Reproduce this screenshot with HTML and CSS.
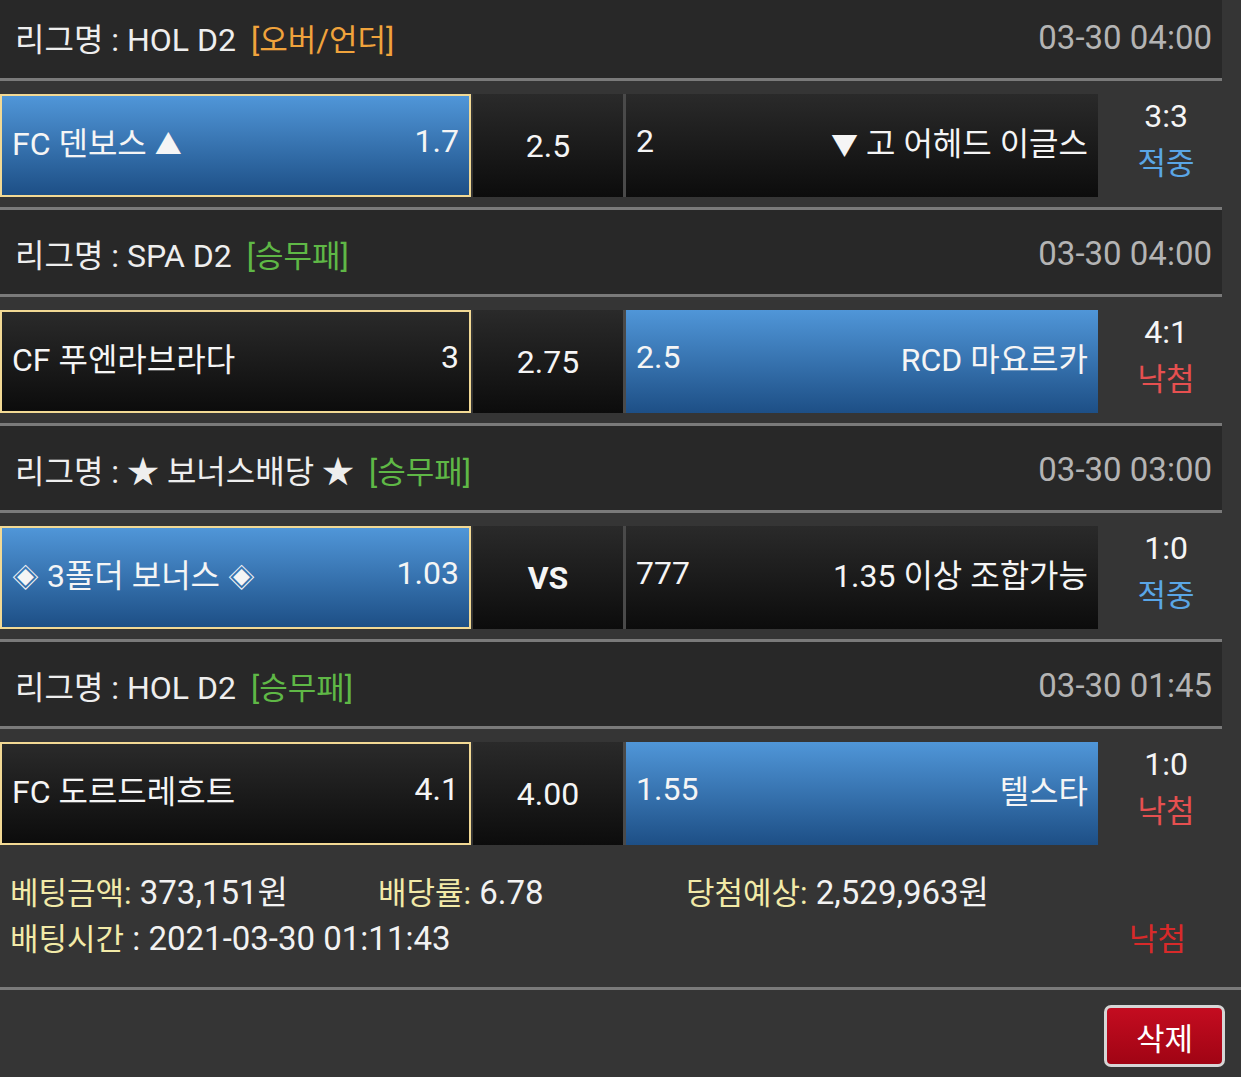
FILE: index.html
```html
<!DOCTYPE html>
<html lang="ko">

<head>
    <meta charset="UTF-8">
    <meta name="viewport" content="width=device-width, initial-scale=1.0">
    <title>배팅내역</title>
    <link rel="stylesheet" href="styles.css">
</head>

<body>
    <div class="bet-list">
        <div class="league">
            <span class="league-name">리그명 : HOL D2</span>
            <span class="tag tag-ou">[오버/언더]</span>
            <span class="league-time">03-30 04:00</span>
        </div>
        <div class="game">
            <div class="cell home picked">
                <span>FC 덴보스 <span class="arrow">▲</span></span>
                <span>1.7</span>
            </div>
            <div class="cell draw">2.5</div>
            <div class="cell away">
                <span>2</span>
                <span><span class="arrow">▼</span> 고 어헤드 이글스</span>
            </div>
            <div class="result">
                <span class="score">3:3</span>
                <span class="status win">적중</span>
            </div>
        </div>

        <div class="league">
            <span class="league-name">리그명 : SPA D2</span>
            <span class="tag tag-wdl">[승무패]</span>
            <span class="league-time">03-30 04:00</span>
        </div>
        <div class="game">
            <div class="cell home">
                <span>CF 푸엔라브라다</span>
                <span>3</span>
            </div>
            <div class="cell draw">2.75</div>
            <div class="cell away picked">
                <span>2.5</span>
                <span>RCD 마요르카</span>
            </div>
            <div class="result">
                <span class="score">4:1</span>
                <span class="status lose">낙첨</span>
            </div>
        </div>

        <div class="league">
            <span class="league-name">리그명 : ★ 보너스배당 ★</span>
            <span class="tag tag-wdl">[승무패]</span>
            <span class="league-time">03-30 03:00</span>
        </div>
        <div class="game">
            <div class="cell home picked">
                <span><span class="arrow">◈</span> 3폴더 보너스 <span class="arrow">◈</span></span>
                <span>1.03</span>
            </div>
            <div class="cell draw vs">VS</div>
            <div class="cell away">
                <span>777</span>
                <span>1.35 이상 조합가능</span>
            </div>
            <div class="result">
                <span class="score">1:0</span>
                <span class="status win">적중</span>
            </div>
        </div>

        <div class="league">
            <span class="league-name">리그명 : HOL D2</span>
            <span class="tag tag-wdl">[승무패]</span>
            <span class="league-time">03-30 01:45</span>
        </div>
        <div class="game last">
            <div class="cell home">
                <span>FC 도르드레흐트</span>
                <span>4.1</span>
            </div>
            <div class="cell draw">4.00</div>
            <div class="cell away picked">
                <span>1.55</span>
                <span>텔스타</span>
            </div>
            <div class="result">
                <span class="score">1:0</span>
                <span class="status lose">낙첨</span>
            </div>
        </div>
    </div>

    <div class="summary">
        <div class="summary-row">
            <span class="item item-amount"><b>베팅금액:</b> 373,151원</span>
            <span class="item item-rate"><b>배당률:</b> 6.78</span>
            <span class="item"><b>당첨예상:</b> 2,529,963원</span>
        </div>
        <div class="summary-row">
            <span class="item"><b>배팅시간</b> : 2021-03-30 01:11:43</span>
            <span class="summary-status">낙첨</span>
        </div>
    </div>

    <div class="actions">
        <button type="button" class="delete-button">삭제</button>
    </div>
</body>

</html>
```

FILE: styles.css
```css
body {
    margin: 0;
    background-color: #353535;
    color: #f2f2f2;
    font-family: Roboto, "Noto Sans CJK KR", sans-serif;
    font-size: 31px;
    overflow: hidden;
}

.bet-list {
    width: 1222px;
    margin-top: -6px;
}

.league {
    display: flex;
    align-items: center;
    height: 87px;
    padding: 2px 10px 0 15px;
    background-color: #282828;
    border-bottom: 3px solid #7a7a7a;
    box-sizing: border-box;
    font-size: 32px;
}

.league-name {
    color: #eeeeee;
    font-size: 32px;
}

.tag {
    margin-left: 15px;
    font-size: 31px;
}

.tag-ou {
    color: #f0a33c;
}

.tag-wdl {
    color: #5fb846;
}

.league-time {
    margin-left: auto;
    color: #b4b4b4;
    font-size: 33px;
}

.game {
    display: flex;
    height: 103px;
    padding: 13px 0 10px;
    border-bottom: 3px solid #7a7a7a;
}

.game.last {
    padding-bottom: 0;
    border-bottom: none;
}

.cell {
    display: flex;
    align-items: center;
    justify-content: space-between;
    height: 103px;
    box-sizing: border-box;
    padding: 0 10px 10px;
    background: linear-gradient(to bottom, #2a2a2a, #0c0c0c);
    color: #f5f5f5;
    font-size: 32px;
}

.cell.picked {
    background: linear-gradient(to bottom, #5096d8, #1d4f86);
}

.arrow {
    font-size: 27px;
}

.home {
    width: 471px;
    border: 2px solid #f2d994;
}

.draw {
    width: 153px;
    margin-left: 2px;
    justify-content: center;
    border-right: 3px solid #4a4a4a;
    padding: 0;
}

.vs {
    font-weight: bold;
}

.away {
    width: 472px;
}

.result {
    display: flex;
    flex-direction: column;
    align-items: center;
    justify-content: center;
    width: 124px;
    height: 103px;
    box-sizing: border-box;
    padding: 0 0 12px 12px;
    gap: 6px;
    line-height: 42px;
    font-size: 32px;
}

.score {
    color: #f5f5f5;
}

.status {
    font-size: 31px;
}

.status.win {
    color: #5aa6e6;
}

.status.lose {
    color: #e65050;
}

.summary {
    padding: 22px 0 28px 10px;
    border-bottom: 3px solid #7a7a7a;
}

.summary-row {
    display: flex;
    align-items: center;
    height: 46px;
    font-size: 33px;
}

.summary-row b {
    font-weight: normal;
    font-size: 31px;
    color: #f2eaa8;
}

.item-amount {
    width: 368px;
}

.item-rate {
    width: 308px;
}

.summary-status {
    margin-left: auto;
    margin-right: 55px;
    font-size: 31px;
    color: #d82a2a;
}

.actions {
    display: flex;
    justify-content: flex-end;
    padding: 15px 16px 0 0;
}

.delete-button {
    width: 121px;
    height: 62px;
    border: 3px solid #d6d6d6;
    border-radius: 7px;
    background: linear-gradient(to bottom, #c40c20, #a00414);
    color: #ffffff;
    font-family: Roboto, "Noto Sans CJK KR", sans-serif;
    font-size: 31px;
    cursor: pointer;
}
```
